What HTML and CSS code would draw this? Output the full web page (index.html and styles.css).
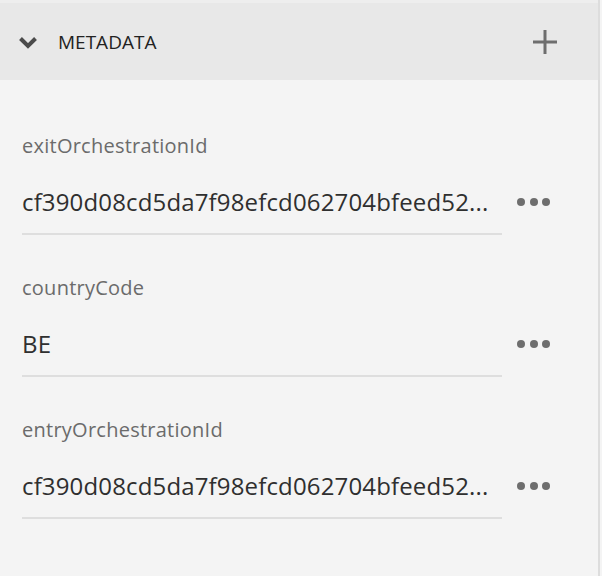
FILE: index.html
```html
<!DOCTYPE html>
<html lang="en">
<head>
<meta charset="utf-8">
<title>Metadata</title>
<link rel="stylesheet" href="styles.css">
</head>
<body>
<div class="panel">
  <div class="header">
    <svg class="chevron" width="20" height="14" viewBox="0 0 20 14"><path d="M2.5 3.5 L10 11 L17.5 3.5" fill="none" stroke="#4b4b4b" stroke-width="4" stroke-linecap="butt" stroke-linejoin="miter"/></svg>
    <span class="title">METADATA</span>
    <svg class="plus" width="24" height="24" viewBox="0 0 24 24"><path d="M12 0 V24 M0 12 H24" stroke="#6e6e6e" stroke-width="3"/></svg>
  </div>
  <div class="body">
    <div class="field">
      <div class="label">exitOrchestrationId</div>
      <div class="row">
        <div class="value">cf390d08cd5da7f98efcd062704bfeed52...</div>
        <div class="more"><i></i><i></i><i></i></div>
      </div>
    </div>
    <div class="field">
      <div class="label">countryCode</div>
      <div class="row">
        <div class="value">BE</div>
        <div class="more"><i></i><i></i><i></i></div>
      </div>
    </div>
    <div class="field">
      <div class="label">entryOrchestrationId</div>
      <div class="row">
        <div class="value">cf390d08cd5da7f98efcd062704bfeed52...</div>
        <div class="more"><i></i><i></i><i></i></div>
      </div>
    </div>
  </div>
</div>
</body>
</html>
```

FILE: styles.css
```css
html, body {
  margin: 0;
  padding: 0;
  background: #f4f4f4;
}
body {
  font-family: "Open Sans", "Noto Sans", sans-serif;
  width: 602px;
  height: 576px;
  overflow: hidden;
}
.panel {
  width: 598px;
  height: 576px;
  border-right: 2px solid #dddddd;
  background: #f4f4f4;
}
.header {
  height: 77px;
  border-top: 3px solid #eeeeee;
  background: #e8e8e8;
  display: flex;
  align-items: center;
  padding-left: 18px;
  padding-right: 41px;
}
.chevron {
  display: block;
  flex: none;
}
.title {
  margin-left: 20px;
  font-size: 19px;
  color: #222222;
  flex: 1;
}
.plus {
  display: block;
  flex: none;
}
.body {
  padding: 54px 0 0 22px;
}
.field {
  width: 480px;
  border-bottom: 2px solid #dedede;
  margin-bottom: 41px;
}
.label {
  font-size: 20px;
  line-height: 24px;
  color: #6b6b6b;
  letter-spacing: 0.25px;
}
.row {
  display: flex;
  align-items: center;
  height: 47px;
  margin-top: 20px;
  margin-bottom: 8px;
}
.value {
  width: 480px;
  flex: none;
  font-size: 24px;
  color: #2f2f2f;
  white-space: nowrap;
  letter-spacing: 0.15px;
}
.more {
  display: flex;
  gap: 4.5px;
  margin-left: 15px;
  flex: none;
}
.more i {
  display: block;
  width: 8px;
  height: 8px;
  border-radius: 50%;
  background: #6e6e6e;
}
```
